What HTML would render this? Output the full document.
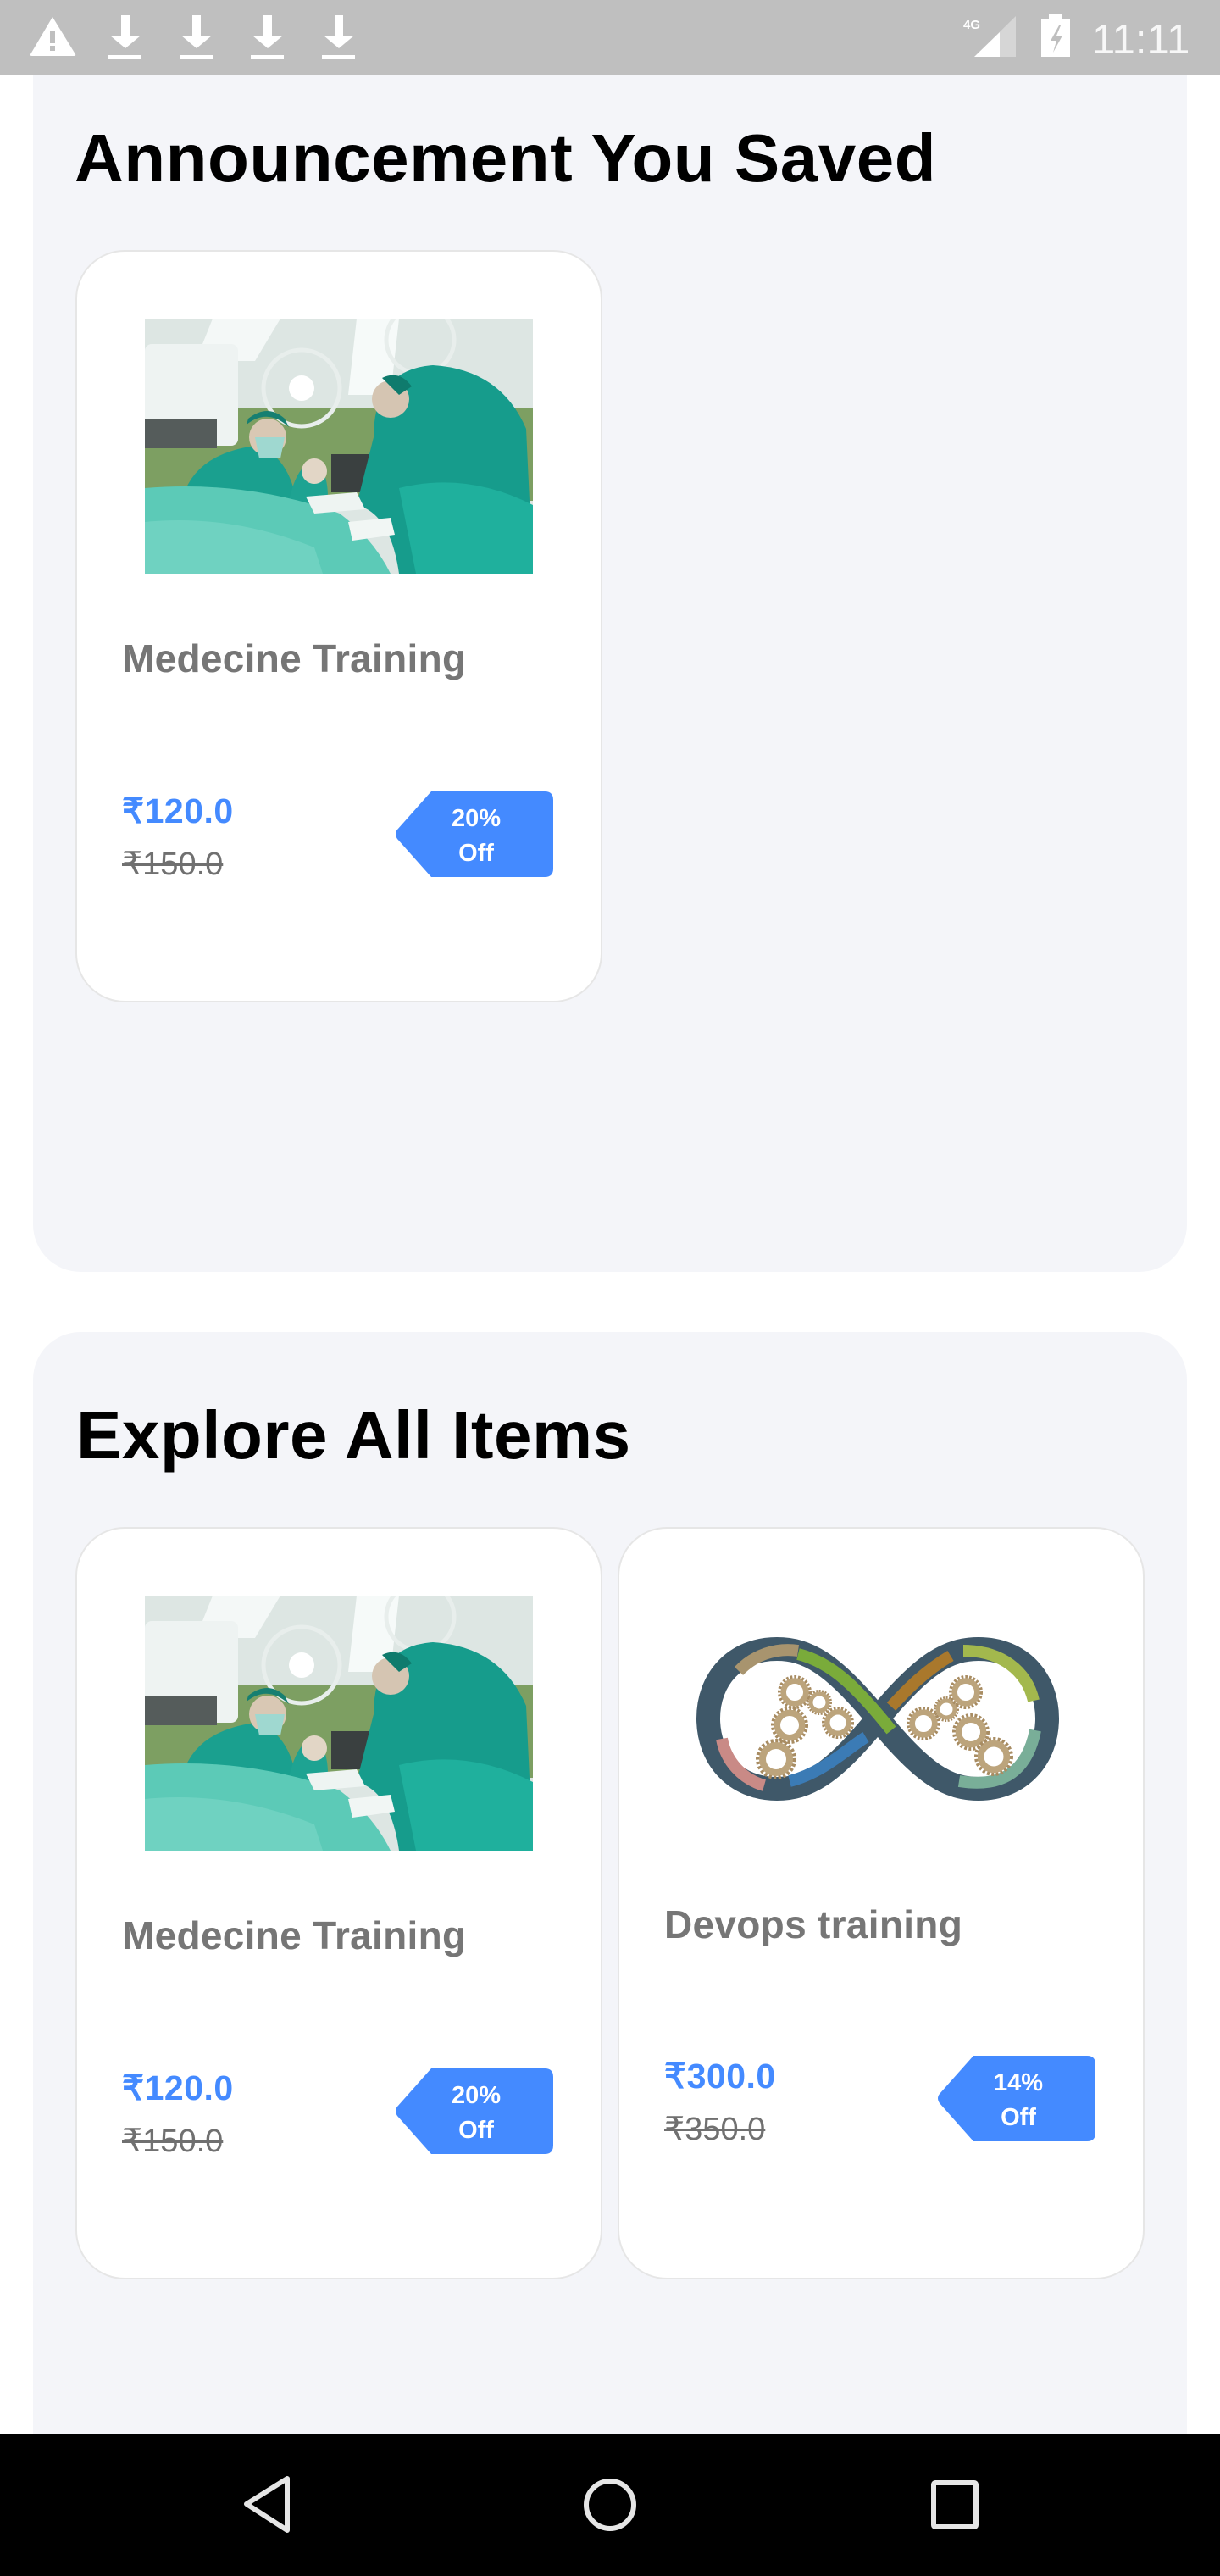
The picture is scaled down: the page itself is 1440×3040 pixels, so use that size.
<!DOCTYPE html>
<html><head><meta charset="utf-8"><style>
*{margin:0;padding:0;box-sizing:border-box}
body{width:1440px;height:3040px;background:#fff;position:relative;overflow:hidden;font-family:"Liberation Sans",sans-serif}
.a{position:absolute}
.panel{position:absolute;left:39px;width:1362px;background:#f4f5f9;border-radius:56px}
.card{position:absolute;width:622px;height:888px;background:#fff;border:2px solid #e6e6e6;border-radius:58px}
.h{position:absolute;font-size:80px;line-height:80px;font-weight:bold;color:#000;white-space:nowrap;letter-spacing:0.5px}
.t{position:absolute;font-size:46px;line-height:46px;color:#767676;white-space:nowrap;font-weight:bold;letter-spacing:0.3px}
.p{position:absolute;font-size:41px;line-height:41px;color:#448aff;font-weight:bold;white-space:nowrap;letter-spacing:0.5px}
.o{position:absolute;font-size:38px;line-height:38px;color:#707070;text-decoration:line-through;white-space:nowrap}
.b{position:absolute;width:186px;height:101px}
.b span{position:absolute;left:4px;right:0;text-align:center;color:#fff;font-weight:bold;font-size:29px;line-height:29px}
</style></head><body>
<svg width="0" height="0" style="position:absolute"><defs>
<symbol id="surg" viewBox="0 0 458 301">
<rect width="458" height="301" fill="#dde6e3"/>
<polygon points="80,0 160,0 130,50 60,50" fill="#f4f8f7"/>
<polygon points="250,0 300,0 290,90 240,90" fill="#f6faf9"/>
<rect x="0" y="105" width="458" height="110" fill="#7d9f62"/>
<rect x="0" y="30" width="110" height="120" rx="8" fill="#eef3f2"/>
<rect x="0" y="118" width="85" height="35" fill="#555c5b"/>
<circle cx="185" cy="82" r="45" fill="none" stroke="#e8eeec" stroke-width="5"/>
<circle cx="185" cy="82" r="15" fill="#fff"/>
<circle cx="325" cy="25" r="40" fill="none" stroke="#e8eeec" stroke-width="5"/>
<rect x="220" y="160" width="60" height="45" fill="#3a4040"/>
<path d="M45 210 Q60 160 130 150 Q170 160 180 220 L175 301 L45 301Z" fill="#1aa08f"/>
<circle cx="145" cy="140" r="22" fill="#d9c8b4"/>
<path d="M120 125 Q145 105 170 128 L165 118 Q145 100 122 118Z" fill="#167f71"/>
<path d="M130 140 L165 140 L160 165 L135 165Z" fill="#9fd8d0"/>
<path d="M170 215 Q180 170 200 170 Q220 180 215 230 L170 240Z" fill="#1ea392"/>
<circle cx="200" cy="180" r="15" fill="#e2d6c6"/>
<path d="M270 140 Q270 60 340 55 Q420 60 450 130 L458 301 L300 301 Q290 230 250 220Z" fill="#169c8c"/>
<path d="M300 200 Q380 180 458 220 L458 301 L320 301Z" fill="#1fb09d"/>
<circle cx="290" cy="95" r="22" fill="#d5c5b2"/>
<path d="M280 70 Q300 60 315 80 L300 90Z" fill="#0f7b6d"/>
<path d="M0 200 Q120 190 230 230 Q270 260 290 301 L0 301Z" fill="#5ccab7"/>
<path d="M0 240 Q100 230 200 270 L210 301 L0 301Z" fill="#6fd2c1"/>
<path d="M190 210 L250 205 L260 225 L200 230Z" fill="#eef4f2"/>
<path d="M240 240 L290 235 L295 255 L245 262Z" fill="#f1f6f4"/>
</symbol>
<symbol id="gear" viewBox="-30 -30 60 60">
<circle r="27" fill="none" stroke="#a88c62" stroke-width="6" stroke-dasharray="4 3"/>
<circle r="20" fill="none" stroke="#bca47c" stroke-width="10"/>
</symbol>
<symbol id="badge" viewBox="0 0 186 101">
<path d="M42 0 H176 Q186 0 186 10 V91 Q186 101 176 101 H42 L2 56 Q-2 50 2 45 Z" fill="#448aff"/>
</symbol>
</defs></svg>

<!-- panel 1 -->
<div class="panel" style="top:30px;height:1471px"></div>
<div class="a" style="left:0;top:0;width:1440px;height:88px;background:#bfbfbf;z-index:1"></div>
<svg class="a" style="left:0;top:0;z-index:2" width="1440" height="88">
<path d="M62 20 L89 64 Q90 66 87 66 L38 66 Q35 66 36 64 Z" fill="#fff"/>
<rect x="59" y="36" width="6" height="15" fill="#bfbfbf"/><rect x="59" y="54" width="6" height="6" fill="#bfbfbf"/>
<g fill="#fff">
<g><rect x="143" y="18" width="10" height="24"/><polygon points="130,42 166,42 148,57"/><rect x="128" y="65" width="39" height="5"/></g>
<g transform="translate(84 0)"><rect x="143" y="18" width="10" height="24"/><polygon points="130,42 166,42 148,57"/><rect x="128" y="65" width="39" height="5"/></g>
<g transform="translate(168 0)"><rect x="143" y="18" width="10" height="24"/><polygon points="130,42 166,42 148,57"/><rect x="128" y="65" width="39" height="5"/></g>
<g transform="translate(252 0)"><rect x="143" y="18" width="10" height="24"/><polygon points="130,42 166,42 148,57"/><rect x="128" y="65" width="39" height="5"/></g>
<polygon points="1150,67 1199,19 1199,67" fill="#d6d6d6"/>
<polygon points="1150,67 1180,38 1180,67"/>
<rect x="1229" y="22" width="34" height="45"/><rect x="1238" y="17" width="16" height="6"/>
</g>
<polygon points="1250,30 1240,48 1247,48 1243,62 1254,42 1247,42 1252,30" fill="#bfbfbf"/>
<text x="1137" y="34" font-family="Liberation Sans" font-weight="bold" font-size="15" fill="#fff">4G</text>
<text x="1289" y="63" font-family="Liberation Sans" font-size="49" fill="#f7f7f7">11:11</text>
</svg>

<div class="h" style="left:88px;top:147px">Announcement You Saved</div>
<div class="card" style="left:89px;top:295px"></div>
<svg class="a" style="left:171px;top:376px" width="458" height="301"><use href="#surg"/></svg>
<div class="t" style="left:144px;top:754px">Medecine Training</div>
<div class="p" style="left:144px;top:937px">₹120.0</div>
<div class="o" style="left:144px;top:1001px">₹150.0</div>
<div class="b" style="left:467px;top:934px"><svg width="186" height="101"><use href="#badge"/></svg><span style="top:18px">20%</span><span style="top:59px">Off</span></div>

<!-- panel 2 -->
<div class="panel" style="top:1572px;height:1400px"></div>
<div class="h" style="left:90px;top:1654px">Explore All Items</div>
<div class="card" style="left:89px;top:1802px"></div>
<svg class="a" style="left:171px;top:1883px" width="458" height="301"><use href="#surg"/></svg>
<div class="t" style="left:144px;top:2261px">Medecine Training</div>
<div class="p" style="left:144px;top:2444px">₹120.0</div>
<div class="o" style="left:144px;top:2508px">₹150.0</div>
<div class="b" style="left:467px;top:2441px"><svg width="186" height="101"><use href="#badge"/></svg><span style="top:18px">20%</span><span style="top:59px">Off</span></div>

<div class="card" style="left:729px;top:1802px"></div>
<svg class="a" style="left:822px;top:1932px" width="428" height="193" viewBox="0 0 428 193">
<path d="M214 96 C160 30 130 14 95 14 C45 14 14 50 14 96 C14 142 45 179 95 179 C130 179 160 163 214 96 C268 30 298 14 333 14 C383 14 414 50 414 96 C414 142 383 179 333 179 C298 179 268 163 214 96Z" fill="none" stroke="#3f5869" stroke-width="28"/>
<path d="M50 40 A80 80 0 0 1 120 16" stroke="#a8946e" stroke-width="14" fill="none"/>
<path d="M30 120 A70 70 0 0 0 80 175" stroke="#c98a86" stroke-width="14" fill="none"/>
<path d="M110 170 C150 160 180 130 200 118" stroke="#3b7bb5" stroke-width="14" fill="none"/>
<path d="M120 20 C160 30 190 60 230 110" stroke="#7aab3a" stroke-width="14" fill="none"/>
<path d="M230 82 C250 60 270 40 300 22" stroke="#a9782c" stroke-width="14" fill="none"/>
<path d="M315 16 C360 16 390 40 398 75" stroke="#a3b84d" stroke-width="14" fill="none"/>
<path d="M400 110 C390 160 360 178 310 170" stroke="#79ae98" stroke-width="14" fill="none"/>
<use href="#gear" x="70" y="120" width="48" height="48"/>
<use href="#gear" x="88" y="82" width="44" height="44"/>
<use href="#gear" x="96" y="45" width="40" height="40"/>
<use href="#gear" x="130" y="62" width="30" height="30"/>
<use href="#gear" x="148" y="82" width="38" height="38"/>
<use href="#gear" x="248" y="82" width="40" height="40"/>
<use href="#gear" x="280" y="70" width="30" height="30"/>
<use href="#gear" x="298" y="45" width="40" height="40"/>
<use href="#gear" x="302" y="90" width="44" height="44"/>
<use href="#gear" x="328" y="118" width="46" height="46"/>
</svg>
<div class="t" style="left:784px;top:2248px">Devops training</div>
<div class="p" style="left:784px;top:2430px">₹300.0</div>
<div class="o" style="left:784px;top:2494px">₹350.0</div>
<div class="b" style="left:1107px;top:2426px"><svg width="186" height="101"><use href="#badge"/></svg><span style="top:18px">14%</span><span style="top:59px">Off</span></div>

<!-- nav bar -->
<div class="a" style="left:0;top:2872px;width:1440px;height:168px;background:#000"></div>
<svg class="a" style="left:0;top:2872px" width="1440" height="168">
<path d="M339 53 L339 114 L291 83 Z" fill="none" stroke="#e6e6e6" stroke-width="6" stroke-linejoin="round"/>
<circle cx="720" cy="84" r="28" fill="none" stroke="#e6e6e6" stroke-width="6"/>
<rect x="1102" y="58" width="50" height="52" rx="2" fill="none" stroke="#e6e6e6" stroke-width="6"/>
</svg>
</body></html>
